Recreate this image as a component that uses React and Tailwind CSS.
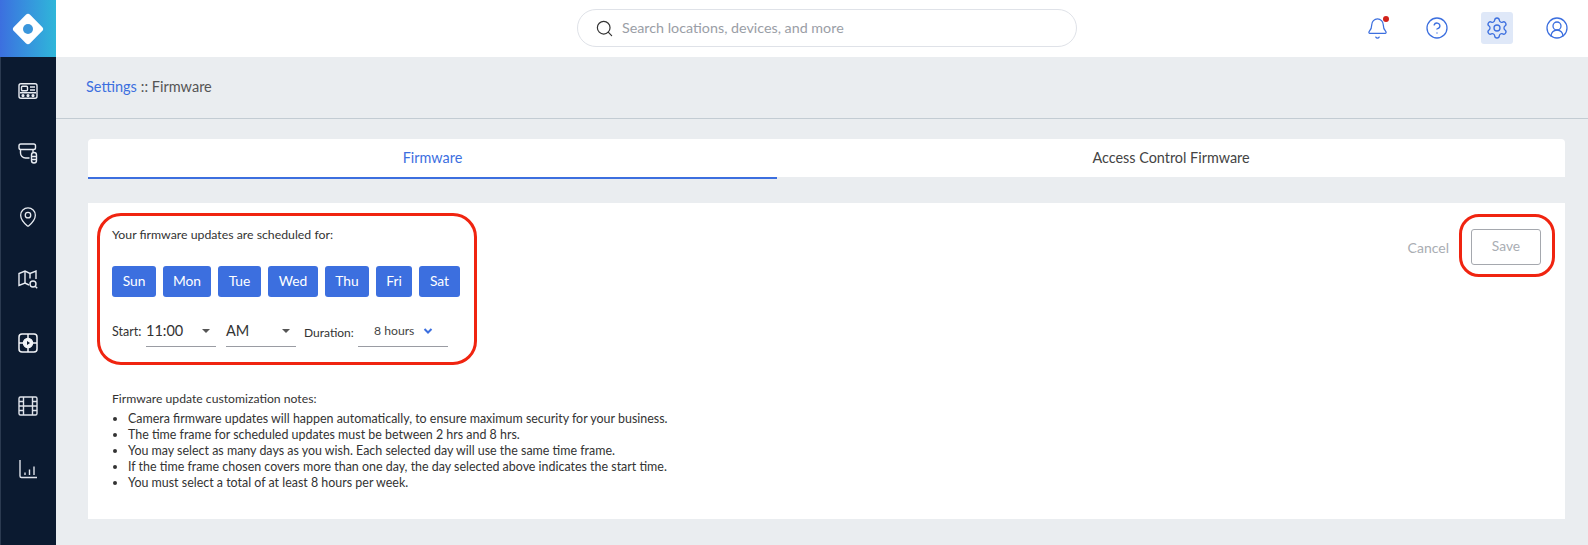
import { Bell, CircleHelp, Settings, CircleUserRound, Search, MapPin } from "lucide-react";

const days = [
  { label: "Sun", w: "w-[44px]" },
  { label: "Mon", w: "w-[48px]" },
  { label: "Tue", w: "w-[43px]" },
  { label: "Wed", w: "w-[50px]" },
  { label: "Thu", w: "w-[44px]" },
  { label: "Fri", w: "w-[36px]" },
  { label: "Sat", w: "w-[41px]" },
];

const notes = [
  "Camera firmware updates will happen automatically, to ensure maximum security for your business.",
  "The time frame for scheduled updates must be between 2 hrs and 8 hrs.",
  "You may select as many days as you wish. Each selected day will use the same time frame.",
  "If the time frame chosen covers more than one day, the day selected above indicates the start time.",
  "You must select a total of at least 8 hours per week.",
];

function Logo() {
  return (
    <svg width="34" height="34" viewBox="0 0 34 34">
      <rect x="5.5" y="5.5" width="23" height="23" rx="3" fill="#fff" transform="rotate(45 17 17)" />
      <circle cx="17" cy="17" r="5" fill="#3a96dc" />
    </svg>
  );
}

function PanelIcon() {
  return (
    <svg width="22" height="22" viewBox="0 0 22 22" fill="none" stroke="#e8ecf2" strokeWidth="1.4">
      <rect x="2" y="3.7" width="18" height="14.6" rx="2" />
      <rect x="4.5" y="6.2" width="6" height="4.6" rx="1" />
      <path d="M13 7h5M13 10h5M3 12.8h16" />
      <circle cx="6" cy="15.6" r="0.9" fill="#e8ecf2" />
      <circle cx="11" cy="15.6" r="0.9" fill="#e8ecf2" />
      <circle cx="16" cy="15.6" r="0.9" fill="#e8ecf2" />
    </svg>
  );
}

function CameraIcon() {
  return (
    <svg width="22" height="24" viewBox="0 0 22 24" fill="none" stroke="#e8ecf2" strokeWidth="1.4">
      <rect x="2" y="2" width="16.5" height="5.5" rx="1.8" />
      <path d="M3.5 7.5v3.5a5 5 0 0 0 5 5h4" />
      <path d="M16 7.5v2.5" />
      <rect x="14.5" y="10.5" width="5" height="10.5" rx="2.5" />
      <path d="M15 14.5h4M15 17.5h4" />
    </svg>
  );
}

function MapSearchIcon() {
  return (
    <svg width="22" height="22" viewBox="0 0 22 22" fill="none" stroke="#e8ecf2" strokeWidth="1.4">
      <path d="M12 16l-4-2-6 2.500V4.500l6-2.500 5 2.500 6-2.500v8" />
      <path d="M8 2v12M13 4.500v5" />
      <circle cx="16" cy="15" r="3" />
      <path d="M18.200 17.200l2 2" />
    </svg>
  );
}

function LiveIcon() {
  return (
    <svg width="22" height="22" viewBox="0 0 22 22" fill="none" stroke="#f2f4f7" strokeWidth="1.5">
      <rect x="2" y="2" width="18" height="18" rx="3" />
      <circle cx="11" cy="11" r="4.500" fill="#f2f4f7" />
      <path d="M11 2v4.500M11 15.500V20M2 11h4.500M15.500 11H20" />
      <path d="M10 9l3 2-3 2z" fill="#0b1a30" stroke="none" />
    </svg>
  );
}

function FilmIcon() {
  return (
    <svg width="22" height="22" viewBox="0 0 22 22" fill="none" stroke="#dfe3ea" strokeWidth="1.4">
      <rect x="2" y="2" width="18" height="18" rx="1.500" />
      <path d="M6.500 2v18M15.500 2v18M2 6.500h4.500M2 11h18M2 15.500h4.500M15.500 6.500H20M15.500 15.500H20" />
    </svg>
  );
}

function ChartIcon() {
  return (
    <svg width="22" height="22" viewBox="0 0 22 22" fill="none" stroke="#dfe3ea" strokeWidth="1.4">
      <path d="M3 2v16a1.500 1.500 0 0 0 1.500 1.500H20" />
      <path d="M8 14.500v2.500M12.500 11.500v5.500M17 8.500v8.500" />
    </svg>
  );
}

function Sidebar() {
  const slot = "h-[63px] flex items-center justify-center";
  return (
    <aside className="w-[56px] shrink-0 bg-[#0b1a30] border-l border-[#2b3a50] min-h-[545px]">
      <div className="-ml-px h-[57px] w-[56px] flex items-center justify-center bg-gradient-to-r from-[#3c6fdf] to-[#2fb6d9]">
        <Logo />
      </div>
      <nav className="mt-[2px] -ml-px">
        <div className={slot}><PanelIcon /></div>
        <div className={slot}><CameraIcon /></div>
        <div className={slot}><MapPin size={22} strokeWidth={1.4} color="#e8ecf2" /></div>
        <div className={slot}><MapSearchIcon /></div>
        <div className={slot}><LiveIcon /></div>
        <div className={slot}><FilmIcon /></div>
        <div className={slot}><ChartIcon /></div>
      </nav>
    </aside>
  );
}

function Header() {
  return (
    <header className="h-[57px] bg-white flex items-center">
      <div className="ml-[521px] mb-px w-[500px] h-[38px] rounded-full border border-[#dfe2e8] flex items-center pl-[17px]">
        <Search size={19} strokeWidth={1.5} color="#333" />
        <span className="ml-[8px] text-[14.3px] text-[#9a9ea6]">Search locations, devices, and more</span>
      </div>
      <div className="ml-auto mr-[15px] mb-px flex items-center gap-[28px] text-[#3c6fdf]">
        <div className="relative w-[32px] h-[32px] flex items-center justify-center">
          <Bell size={23} strokeWidth={1.3} />
          <span className="absolute top-[4px] right-[4px] w-[6px] h-[6px] rounded-full bg-[#d2221a]" />
        </div>
        <div className="w-[32px] h-[32px] flex items-center justify-center"><CircleHelp size={24} strokeWidth={1.3} /></div>
        <div className="w-[32px] h-[32px] rounded-[3px] bg-[#dfe8f8] flex items-center justify-center"><Settings size={24} strokeWidth={1.3} /></div>
        <div className="w-[32px] h-[32px] flex items-center justify-center"><CircleUserRound size={24} strokeWidth={1.3} /></div>
      </div>
    </header>
  );
}

function Select({ value, w, caret, small }) {
  return (
    <div className={"h-[31px] border-b border-[#9a9ca3] flex items-center justify-between " + w}>
      <span className={small ? "ml-[16px] text-[12.2px] text-[#444]" : "text-[14.5px] text-[#333]"}>{value}</span>
      {caret}
    </div>
  );
}

const GrayCaret = <span className="mr-[6px] w-0 h-0 border-x-[4px] border-x-transparent border-t-[4px] border-t-[#555]" />;
const BlueCaret = (
  <svg className="mr-[15px]" width="10" height="8" viewBox="0 0 10 8" fill="none" stroke="#3c6fdf" strokeWidth="2">
    <path d="M1.500 2l3.500 3.500L8.500 2" />
  </svg>
);

export default function App() {
  return (
    <div className="flex font-['Lato','Noto_Sans',sans-serif] bg-[#eaedf0] h-[545px] overflow-hidden">
      <Sidebar />
      <div className="flex-1">
        <Header />
        <div className="h-[62px] border-b border-[#c3ccd3] flex items-center pl-[30px] pb-[2px] text-[14.5px] text-[#555]">
          <span className="text-[#3c6fdf]">Settings</span>
          <span className="ml-[4px]">:: Firmware</span>
        </div>
        <div className="ml-[32px] mr-[23px] mt-[20px]">
          <div className="flex bg-white rounded-t-[4px] h-[38px] text-[14.4px]">
            <div className="w-[689px] flex items-center justify-center text-[#3c6fdf] shadow-[0_2px_0_#3c6fdf]">Firmware</div>
            <div className="flex-1 flex items-center justify-center text-[#444]">Access Control Firmware</div>
          </div>
          <section className="bg-white mt-[26px] h-[316px] flex justify-between">
            <div>
              <div className="ml-[9px] mt-[10px] w-[380px] h-[152px] border-[3px] border-[#f02410] rounded-[24px] pl-[12px] pt-[11px]">
                <p className="text-[12.3px] text-[#333] leading-[16px]">Your firmware updates are scheduled for:</p>
                <div className="flex gap-[7px] mt-[23px]">
                  {days.map((d) => (
                    <button key={d.label} className={"h-[31px] rounded-[3px] bg-[#3c6fdf] text-white text-[13.8px] pb-px " + d.w}>
                      {d.label}
                    </button>
                  ))}
                </div>
                <div className="flex items-end mt-[19px] text-[12.5px] text-[#333]">
                  <span className="w-[34px] mb-[5px]">Start:</span>
                  <Select value="11:00" w="w-[70px]" caret={GrayCaret} />
                  <div className="w-[10px]" />
                  <Select value="AM" w="w-[70px]" caret={GrayCaret} />
                  <span className="ml-[8px] w-[54px] mb-[5px] text-[12px]">Duration:</span>
                  <Select value="8 hours" w="w-[90px]" caret={BlueCaret} small />
                </div>
              </div>
              <div className="ml-[24px] mt-[26px] text-[12.2px] text-[#333] leading-[16px]">
                <p className="mb-[4px]">Firmware update customization notes:</p>
                <ul className="list-disc pl-[16px] text-[12.45px]">
                  {notes.map((n) => <li key={n}>{n}</li>)}
                </ul>
              </div>
            </div>
            <div className="mr-[10px] mt-[11px] h-[63px] flex items-center">
              <span className="text-[14px] text-[#a9adb3] mr-[10px] mt-[3px]">Cancel</span>
              <div className="w-[96px] h-[63px] border-[3px] border-[#f02410] rounded-[20px] flex items-center justify-center pr-[2px]">
                <button className="w-[70px] h-[36px] mt-[2px] rounded-[3px] border border-[#a5a8ae] text-[13.8px] text-[#a9adb3]">Save</button>
              </div>
            </div>
          </section>
        </div>
      </div>
    </div>
  );
}
